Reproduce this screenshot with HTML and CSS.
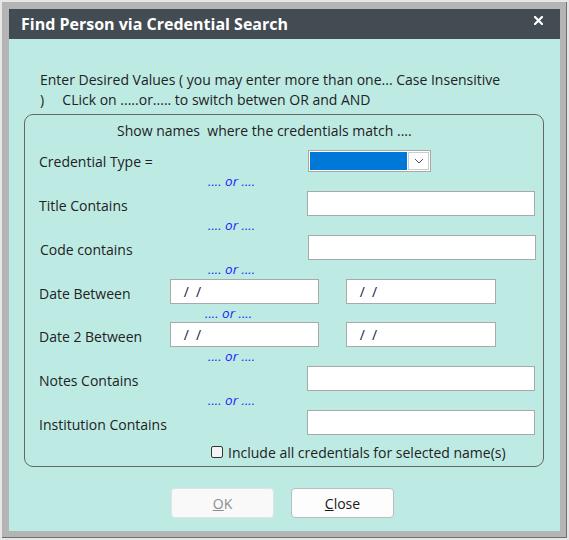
FILE: index.html
```html
<!DOCTYPE html>
<html lang="en">
<head>
    <meta charset="UTF-8">
    <meta name="viewport" content="width=device-width, initial-scale=1.0">
    <title>Find Person via Credential Search</title>
    <link rel="stylesheet" href="styles.css">
</head>
<body>
    <div class="window">
        <div class="frame">
            <div class="titlebar">
                <span class="title">Find Person via Credential Search</span>
                <svg class="close-x" width="9" height="9" viewBox="0 0 9 9">
                    <path d="M1 1 L8 8 M8 1 L1 8" stroke="#ffffff" stroke-width="2.2" stroke-linecap="square"/>
                </svg>
            </div>

            <div class="content">
                <p class="intro">Enter Desired Values ( you may enter more than one... Case Insensitive<br>)&nbsp;&nbsp;&nbsp;&nbsp; CLick on .....or..... to switch betwen OR and AND</p>

                <div class="group">
                    <div class="group-heading">Show names&nbsp; where the credentials match ....</div>

                    <div class="row row-select">
                        <span class="label label-wide">Credential Type =</span>
                        <div class="select">
                            <div class="select-value"></div>
                            <div class="select-btn">
                                <svg width="10" height="6" viewBox="0 0 10 6">
                                    <path d="M1 1 L5 5 L9 1" fill="none" stroke="#555" stroke-width="1"/>
                                </svg>
                            </div>
                        </div>
                    </div>
                    <div class="or">.... or ....</div>

                    <div class="row">
                        <span class="label label-wide">Title Contains</span>
                        <div class="input input-wide"></div>
                    </div>
                    <div class="or">.... or ....</div>

                    <div class="row row-code">
                        <span class="label label-wide">Code contains</span>
                        <div class="input input-wide"></div>
                    </div>
                    <div class="or">.... or ....</div>

                    <div class="row">
                        <span class="label label-date">Date Between</span>
                        <div class="input input-date">&nbsp;/&nbsp; /</div>
                        <div class="input input-date input-date2">&nbsp;/&nbsp; /</div>
                    </div>
                    <div class="or or-short">.... or ....</div>

                    <div class="row">
                        <span class="label label-date">Date 2 Between</span>
                        <div class="input input-date">&nbsp;/&nbsp; /</div>
                        <div class="input input-date input-date2">&nbsp;/&nbsp; /</div>
                    </div>
                    <div class="or">.... or ....</div>

                    <div class="row">
                        <span class="label label-wide">Notes Contains</span>
                        <div class="input input-wide"></div>
                    </div>
                    <div class="or">.... or ....</div>

                    <div class="row">
                        <span class="label label-wide">Institution Contains</span>
                        <div class="input input-wide"></div>
                    </div>

                    <label class="check-row">
                        <span class="checkbox"></span>
                        <span>Include all credentials for selected name(s)</span>
                    </label>
                </div>

                <div class="buttons">
                    <button class="btn btn-disabled"><u>O</u>K</button>
                    <button class="btn"><u>C</u>lose</button>
                </div>
            </div>
        </div>
    </div>
</body>
</html>
```

FILE: styles.css
```css
body {
    margin: 0;
    padding: 0;
    background-color: #f0f0f0;
    font-family: 'Open Sans', 'Noto Sans', sans-serif;
    font-size: 14px;
    color: #222222;
}

.window {
    width: 569px;
    height: 540px;
    box-sizing: border-box;
    border: 2px solid #e6e6e6;
}

.frame {
    height: 100%;
    box-sizing: border-box;
    background-color: #b4b4b4;
    border-right: 1px solid #707070;
    border-bottom: 1px solid #707070;
    padding: 7px 6px 6px 7px;
    display: flex;
    flex-direction: column;
}

/* Title bar */
.titlebar {
    height: 30px;
    flex-shrink: 0;
    background-color: #434b53;
    color: #ffffff;
    display: flex;
    align-items: center;
    justify-content: space-between;
    padding: 0 17px 0 12px;
}

.title {
    font-weight: 700;
    font-size: 16px;
    margin-top: -1px;
}

.close-x {
    margin-top: -8px;
}

/* Body of the dialog */
.content {
    flex: 1;
    background-color: #bdebe4;
    padding: 31px 0 0 0;
}

.intro {
    margin: 0 0 4px 31px;
    line-height: 20px;
}

.group {
    margin-left: 15px;
    width: 520px;
    height: 353px;
    box-sizing: border-box;
    border: 1px solid #666666;
    border-radius: 9px;
    padding: 7px 0 0 0;
}

.group-heading {
    padding-left: 92px;
    line-height: 18px;
    margin-bottom: 10px;
}

.row {
    display: flex;
    align-items: center;
    height: 25px;
    padding-left: 14px;
}

.row-select {
    height: 22px;
}

.row-code {
    padding-left: 15px;
}

.label {
    flex-shrink: 0;
    margin-top: 3px;
}

.row-select .label {
    margin-top: 1px;
}

.label-wide {
    width: 268px;
}

.label-date {
    width: 131px;
}

.input {
    height: 25px;
    box-sizing: border-box;
    background-color: #ffffff;
    border: 1px solid #a9a9a9;
}

.input-wide {
    width: 228px;
}

.input-date {
    width: 149px;
    padding-left: 9px;
    line-height: 23px;
    font-size: 14px;
    color: #1a1a40;
}

.input-date2 {
    width: 150px;
    margin-left: 27px;
}

/* Dropdown */
.select {
    width: 123px;
    height: 22px;
    box-sizing: border-box;
    margin-left: 1px;
    border: 1px solid #a9a9a9;
    background-color: #ffffff;
    display: flex;
    padding: 1px;
}

.select-value {
    flex: 1;
    background-color: #0078d7;
    margin-right: 1px;
}

.select-btn {
    width: 21px;
    box-sizing: border-box;
    border: 1px solid #cccccc;
    display: flex;
    align-items: center;
    justify-content: center;
}

.or {
    height: 19px;
    line-height: 19px;
    padding-left: 183px;
    color: #1f1fff;
    font-style: italic;
    font-size: 13.5px;
}

.or-short {
    height: 18px;
    line-height: 18px;
    padding-left: 180px;
}

.check-row {
    display: flex;
    align-items: center;
    padding-left: 186px;
    margin-top: 8px;
    height: 18px;
}

.checkbox {
    width: 12px;
    height: 12px;
    box-sizing: border-box;
    border: 1px solid #333333;
    border-radius: 2px;
    background-color: #f4f4f4;
    margin-right: 5px;
}

/* Buttons */
.buttons {
    display: flex;
    gap: 17px;
    padding-left: 162px;
    margin-top: 21px;
}

.btn {
    width: 103px;
    height: 30px;
    font-family: 'Open Sans', 'Noto Sans', sans-serif;
    font-size: 14px;
    color: #1a1a1a;
    background-color: #fdfdfd;
    border: 1px solid #bcbcbc;
    border-radius: 4px;
}

.btn-disabled {
    color: #8c8c8c;
    background-color: #f9f9f9;
    border-color: #e2e2e2;
}
```
